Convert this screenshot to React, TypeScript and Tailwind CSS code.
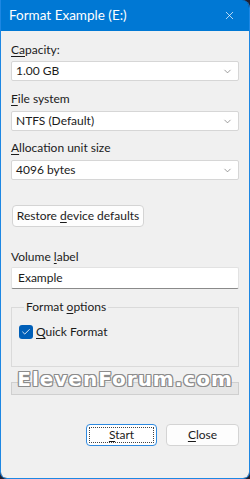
import { ChevronDown, X, Check } from "lucide-react";

const font = { fontFamily: 'Lato, "Noto Sans", sans-serif' };

function Label({ pre, u, post }: { pre?: string; u: string; post?: string }) {
  return (
    <div className="h-[16px] text-[12px] leading-[16px] text-[#1b1b1b]">
      {pre}
      <span className="underline underline-offset-[2px]">{u}</span>
      {post}
    </div>
  );
}

function Select({ value }: { value: string }) {
  return (
    <div className="flex h-[20px] items-center justify-between rounded-[2px] border border-[#d6d6d6] bg-white pl-[4px] pr-[5px] text-[12px] text-[#1b1b1b]">
      <span>{value}</span>
      <ChevronDown size={11} strokeWidth={1.5} className="text-[#707070]" />
    </div>
  );
}

export default function App() {
  return (
    <div className="h-[479px] w-[250px] bg-[#231f2e]" style={font}>
      <div className="flex h-full flex-col overflow-hidden rounded-tr-[8px] rounded-b-[7px] border border-t-0 border-[#1d87e3]">
        <div className="flex h-[31px] shrink-0 items-center justify-between bg-[#0078d4] pl-[8px] pr-[13px] text-white">
          <span className="text-[13.5px]">Format Example (E:)</span>
          <X size={13} strokeWidth={1.3} />
        </div>

        <div className="relative flex flex-1 flex-col bg-[#f0f0f0] px-[10px] pt-[11px]">
          <Label u="Ca" post="pacity:" />
          <div className="mt-[3px]">
            <Select value="1.00 GB" />
          </div>

          <div className="mt-[10px]">
            <Label u="F" post="ile system" />
          </div>
          <div className="mt-[4px]">
            <Select value="NTFS (Default)" />
          </div>

          <div className="mt-[9px]">
            <Label u="A" post="llocation unit size" />
          </div>
          <div className="mt-[4px]">
            <Select value="4096 bytes" />
          </div>

          <button className="ml-[1px] mt-[25px] h-[22px] w-[132px] self-start whitespace-nowrap rounded-[4px] border border-[#d4d4d4] bg-[#fdfdfd] text-[12px] text-[#1b1b1b]">
            Restore <span className="underline underline-offset-[2px]">d</span>evice defaults
          </button>

          <div className="mt-[22px]">
            <Label pre="Volume " u="l" post="abel" />
          </div>
          <div className="mt-[2px] flex h-[22px] items-center rounded-[2px] border border-[#e2e2e2] border-b-[#8a8a8a] bg-white pl-[6px] text-[12px] text-[#1b1b1b]">
            Example
          </div>

          <fieldset className="mt-[10px] h-[68px] border border-[#dadada] px-[7px]">
            <legend className="ml-[5px] px-[2px] text-[12px] leading-[16px] text-[#1b1b1b]">
              Format <span className="underline underline-offset-[2px]">o</span>ptions
            </legend>
            <div className="mt-[8px] flex items-center gap-[3px]">
              <span className="flex h-[14px] w-[14px] items-center justify-center rounded-[3px] bg-[#005fb8]">
                <Check size={10} strokeWidth={2} className="text-white" />
              </span>
              <span className="text-[12px] text-[#1b1b1b]">
                <span className="underline underline-offset-[2px]">Q</span>uick Format
              </span>
            </div>
          </fieldset>

          <div className="mt-[15px] h-[13px] border border-[#cfcfcf] bg-[#e6e6e6]" />

          <div className="mt-[29px] flex justify-end gap-[9px]">
            <button className="flex h-[22px] w-[71px] items-center justify-center rounded-[4px] border border-[#2e8ae0] bg-white p-[2px] text-[12px] text-[#1b1b1b]">
              <span className="flex h-full w-full items-center justify-center border border-dotted border-[#444]">
                <span>
                  <span className="underline underline-offset-[2px]">S</span>tart
                </span>
              </span>
            </button>
            <button className="h-[22px] w-[73px] rounded-[4px] border border-[#d4d4d4] bg-[#fdfdfd] text-[12px] text-[#1b1b1b]">
              <span className="underline underline-offset-[2px]">C</span>lose
            </button>
          </div>

          <div
            className="pointer-events-none absolute left-0 right-0 top-[337px] whitespace-nowrap text-center text-[20px] font-bold leading-[22px] text-white"
            style={{ fontFamily: '"DejaVu Sans", sans-serif', letterSpacing: "1px", textShadow: "1px 0 #8c8c8c, -1px 0 #8c8c8c, 0 1px #8c8c8c, 0 -1px #8c8c8c, 1px 1px #8c8c8c, -1px -1px #8c8c8c, 1px -1px #8c8c8c, -1px 1px #8c8c8c" }}
          >
            ElevenForum.com
          </div>
        </div>
      </div>
    </div>
  );
}
